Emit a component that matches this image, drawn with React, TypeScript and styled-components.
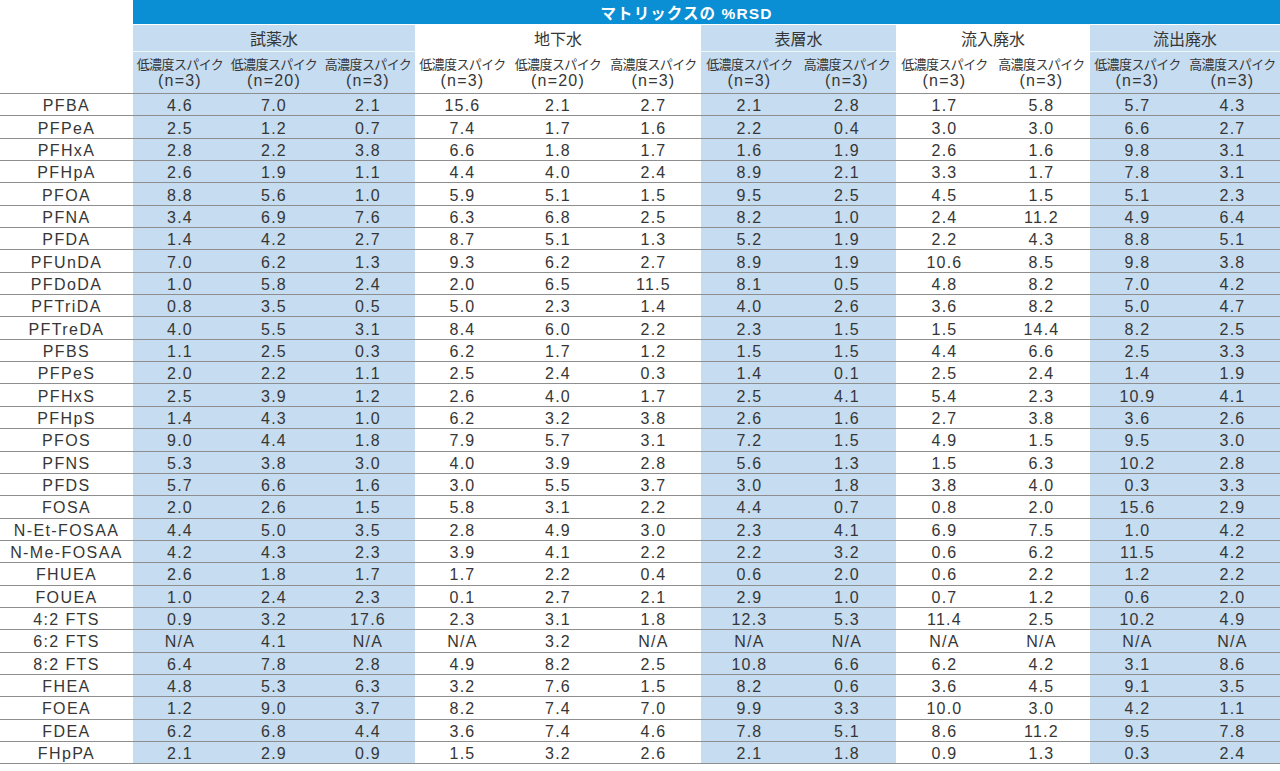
import styled, { createGlobalStyle } from "styled-components";

const GlobalStyle = createGlobalStyle`
  html, body {
    margin: 0;
    padding: 0;
    background: #fff;
  }
  body {
    font-family: "Liberation Sans", "Noto Sans CJK JP", sans-serif;
    color: #363636;
  }
`;

const SHADE = "#c6dcf0";
const LINE = "#8e8e8e";

type Group = {
  name: string;
  shaded: boolean;
  cols: { label: string; n: string; width: number }[];
};

const GROUPS: Group[] = [
  {
    name: "試薬水",
    shaded: true,
    cols: [
      { label: "低濃度スパイク", n: "(n=3)", width: 94 },
      { label: "低濃度スパイク", n: "(n=20)", width: 94 },
      { label: "高濃度スパイク", n: "(n=3)", width: 94 },
    ],
  },
  {
    name: "地下水",
    shaded: false,
    cols: [
      { label: "低濃度スパイク", n: "(n=3)", width: 95 },
      { label: "低濃度スパイク", n: "(n=20)", width: 96 },
      { label: "高濃度スパイク", n: "(n=3)", width: 95 },
    ],
  },
  {
    name: "表層水",
    shaded: true,
    cols: [
      { label: "低濃度スパイク", n: "(n=3)", width: 97 },
      { label: "高濃度スパイク", n: "(n=3)", width: 98 },
    ],
  },
  {
    name: "流入廃水",
    shaded: false,
    cols: [
      { label: "低濃度スパイク", n: "(n=3)", width: 97 },
      { label: "高濃度スパイク", n: "(n=3)", width: 97 },
    ],
  },
  {
    name: "流出廃水",
    shaded: true,
    cols: [
      { label: "低濃度スパイク", n: "(n=3)", width: 95 },
      { label: "高濃度スパイク", n: "(n=3)", width: 95 },
    ],
  },
];

const ROWS: [string, string][] = [
  ["PFBA", "4.6 7.0 2.1 15.6 2.1 2.7 2.1 2.8 1.7 5.8 5.7 4.3"],
  ["PFPeA", "2.5 1.2 0.7 7.4 1.7 1.6 2.2 0.4 3.0 3.0 6.6 2.7"],
  ["PFHxA", "2.8 2.2 3.8 6.6 1.8 1.7 1.6 1.9 2.6 1.6 9.8 3.1"],
  ["PFHpA", "2.6 1.9 1.1 4.4 4.0 2.4 8.9 2.1 3.3 1.7 7.8 3.1"],
  ["PFOA", "8.8 5.6 1.0 5.9 5.1 1.5 9.5 2.5 4.5 1.5 5.1 2.3"],
  ["PFNA", "3.4 6.9 7.6 6.3 6.8 2.5 8.2 1.0 2.4 11.2 4.9 6.4"],
  ["PFDA", "1.4 4.2 2.7 8.7 5.1 1.3 5.2 1.9 2.2 4.3 8.8 5.1"],
  ["PFUnDA", "7.0 6.2 1.3 9.3 6.2 2.7 8.9 1.9 10.6 8.5 9.8 3.8"],
  ["PFDoDA", "1.0 5.8 2.4 2.0 6.5 11.5 8.1 0.5 4.8 8.2 7.0 4.2"],
  ["PFTriDA", "0.8 3.5 0.5 5.0 2.3 1.4 4.0 2.6 3.6 8.2 5.0 4.7"],
  ["PFTreDA", "4.0 5.5 3.1 8.4 6.0 2.2 2.3 1.5 1.5 14.4 8.2 2.5"],
  ["PFBS", "1.1 2.5 0.3 6.2 1.7 1.2 1.5 1.5 4.4 6.6 2.5 3.3"],
  ["PFPeS", "2.0 2.2 1.1 2.5 2.4 0.3 1.4 0.1 2.5 2.4 1.4 1.9"],
  ["PFHxS", "2.5 3.9 1.2 2.6 4.0 1.7 2.5 4.1 5.4 2.3 10.9 4.1"],
  ["PFHpS", "1.4 4.3 1.0 6.2 3.2 3.8 2.6 1.6 2.7 3.8 3.6 2.6"],
  ["PFOS", "9.0 4.4 1.8 7.9 5.7 3.1 7.2 1.5 4.9 1.5 9.5 3.0"],
  ["PFNS", "5.3 3.8 3.0 4.0 3.9 2.8 5.6 1.3 1.5 6.3 10.2 2.8"],
  ["PFDS", "5.7 6.6 1.6 3.0 5.5 3.7 3.0 1.8 3.8 4.0 0.3 3.3"],
  ["FOSA", "2.0 2.6 1.5 5.8 3.1 2.2 4.4 0.7 0.8 2.0 15.6 2.9"],
  ["N-Et-FOSAA", "4.4 5.0 3.5 2.8 4.9 3.0 2.3 4.1 6.9 7.5 1.0 4.2"],
  ["N-Me-FOSAA", "4.2 4.3 2.3 3.9 4.1 2.2 2.2 3.2 0.6 6.2 11.5 4.2"],
  ["FHUEA", "2.6 1.8 1.7 1.7 2.2 0.4 0.6 2.0 0.6 2.2 1.2 2.2"],
  ["FOUEA", "1.0 2.4 2.3 0.1 2.7 2.1 2.9 1.0 0.7 1.2 0.6 2.0"],
  ["4:2 FTS", "0.9 3.2 17.6 2.3 3.1 1.8 12.3 5.3 11.4 2.5 10.2 4.9"],
  ["6:2 FTS", "N/A 4.1 N/A N/A 3.2 N/A N/A N/A N/A N/A N/A N/A"],
  ["8:2 FTS", "6.4 7.8 2.8 4.9 8.2 2.5 10.8 6.6 6.2 4.2 3.1 8.6"],
  ["FHEA", "4.8 5.3 6.3 3.2 7.6 1.5 8.2 0.6 3.6 4.5 9.1 3.5"],
  ["FOEA", "1.2 9.0 3.7 8.2 7.4 7.0 9.9 3.3 10.0 3.0 4.2 1.1"],
  ["FDEA", "6.2 6.8 4.4 3.6 7.4 4.6 7.8 5.1 8.6 11.2 9.5 7.8"],
  ["FHpPA", "2.1 2.9 0.9 1.5 3.2 2.6 2.1 1.8 0.9 1.3 0.3 2.4"],
];

// shading per data column, flattened from the groups
const COL_SHADE = GROUPS.flatMap((g) => g.cols.map(() => g.shaded));

const Page = styled.div`
  width: 1280px;
  height: 771px;
  overflow: hidden;
  background: #fff;
`;

const Table = styled.table`
  width: 1280px;
  table-layout: fixed;
  border-collapse: collapse;
  border-spacing: 0;
`;

const Corner = styled.th`
  background: #fff;
  padding: 0;
  border-bottom: 1.5px solid ${LINE};
`;

const TitleCell = styled.th`
  height: 24px;
  padding: 0 40px 0 0;
  background: #0a8ed4;
  color: #fff;
  font-family: "Liberation Sans", "Noto Sans CJK JP", sans-serif;
  font-size: 15.5px;
  font-weight: 700;
  letter-spacing: 1.1px;
  text-align: center;
  vertical-align: middle;
`;

const GroupCell = styled.th<{ $shaded: boolean }>`
  height: 26px;
  padding: 0;
  background: ${(p) => (p.$shaded ? SHADE : "#fff")};
  border-top: 1px solid #fff;
  border-bottom: 1px solid rgba(255, 255, 255, 0.7);
  font-family: "Noto Sans CJK JP", sans-serif;
  font-size: 16px;
  font-weight: 400;
  color: #363636;
  text-align: center;
  vertical-align: middle;
  line-height: 1;
`;

const SubCell = styled.th<{ $shaded: boolean }>`
  height: 41px;
  padding: 0;
  background: ${(p) => (p.$shaded ? SHADE : "#fff")};
  border-bottom: 1.5px solid ${LINE};
  font-weight: 400;
  color: #363636;
  text-align: center;
  vertical-align: middle;
  white-space: nowrap;
  overflow: hidden;
`;

const SubLabel = styled.div`
  font-family: "Noto Sans CJK JP", sans-serif;
  font-size: 13px;
  line-height: 17px;
  letter-spacing: -0.6px;
`;

const SubCount = styled.div`
  font-family: "Liberation Sans", sans-serif;
  font-size: 16px;
  line-height: 18px;
  letter-spacing: 1.2px;
`;

const Row = styled.tr`
  height: 22.35px;
`;

const NameCell = styled.td`
  padding: 3px 0 0;
  background: #fff;
  border-bottom: 1.5px solid ${LINE};
  font-size: 16px;
  letter-spacing: 1.4px;
  text-align: center;
  vertical-align: middle;
  line-height: 1;
  white-space: nowrap;
`;

const ValueCell = styled.td<{ $shaded: boolean }>`
  padding: 3px 0 0;
  background: ${(p) => (p.$shaded ? SHADE : "#fff")};
  border-bottom: 1.5px solid ${LINE};
  font-size: 16px;
  letter-spacing: 1.2px;
  text-align: center;
  vertical-align: middle;
  line-height: 1;
  white-space: nowrap;
`;

export default function App() {
  const allCols = GROUPS.flatMap((g) => g.cols);

  return (
    <Page>
      <GlobalStyle />
      <Table>
        <colgroup>
          <col style={{ width: 133 }} />
          {allCols.map((c, i) => (
            <col key={i} style={{ width: c.width }} />
          ))}
        </colgroup>
        <thead>
          <tr>
            <Corner rowSpan={3} />
            <TitleCell colSpan={allCols.length}>マトリックスの %RSD</TitleCell>
          </tr>
          <tr>
            {GROUPS.map((g) => (
              <GroupCell key={g.name} colSpan={g.cols.length} $shaded={g.shaded}>
                {g.name}
              </GroupCell>
            ))}
          </tr>
          <tr>
            {GROUPS.flatMap((g) =>
              g.cols.map((c, i) => (
                <SubCell key={g.name + i} $shaded={g.shaded}>
                  <SubLabel>{c.label}</SubLabel>
                  <SubCount>{c.n}</SubCount>
                </SubCell>
              ))
            )}
          </tr>
        </thead>
        <tbody>
          {ROWS.map(([name, values]) => (
            <Row key={name}>
              <NameCell>{name}</NameCell>
              {values.split(" ").map((v, i) => (
                <ValueCell key={i} $shaded={COL_SHADE[i]}>
                  {v}
                </ValueCell>
              ))}
            </Row>
          ))}
        </tbody>
      </Table>
    </Page>
  );
}
